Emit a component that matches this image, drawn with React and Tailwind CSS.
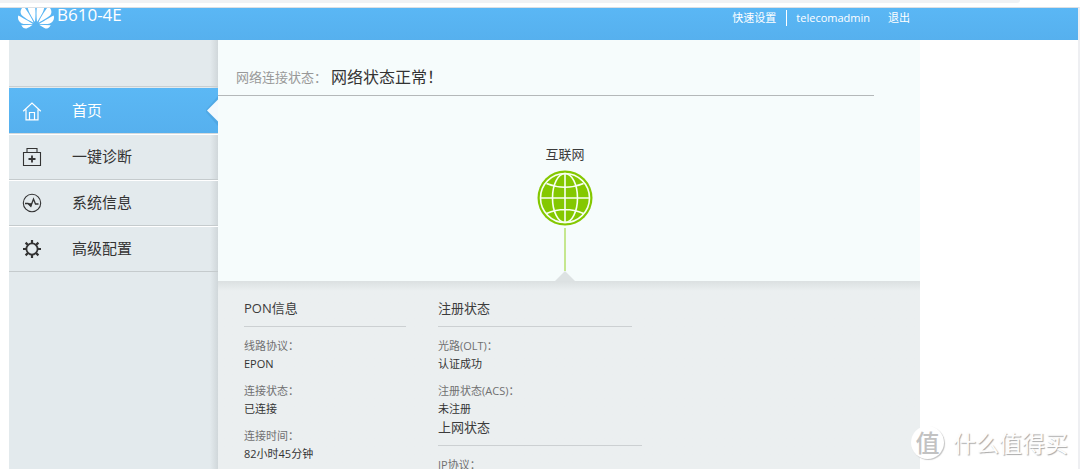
import React from "react";
import { SiHuawei } from "react-icons/si";

const HomeIcon = () => (
  <svg viewBox="0 0 20 20" className="size-5" fill="none" stroke="currentColor" strokeWidth="1.2" aria-hidden="true">
    <path d="M1.200 10.200 10 2l8.800 8.200M4 8.500V18.800h12V8.500M7.500 18.500V11.500h5v7" />
  </svg>
);

const DiagnoseIcon = () => (
  <svg viewBox="0 0 20 20" className="size-5" fill="none" stroke="currentColor" strokeWidth="1.1" aria-hidden="true">
    <path d="M1.500 5.500h17v13h-17zM5 5.500V1.500h10v4" />
    <path d="M10 8.500v7M6.500 12h7" strokeWidth="1.8" />
  </svg>
);

const InfoIcon = () => (
  <svg viewBox="0 0 20 20" className="size-5" fill="none" stroke="currentColor" strokeWidth="1.1" aria-hidden="true">
    <circle cx="10" cy="10" r="8.700" />
    <path d="M3 10.500h3l2.800 2.800L11.500 6l2 5h3" strokeWidth="1.3" />
    <path d="M6 10.500l2.800 2.800 1-2.800z" fill="currentColor" strokeWidth="0.6" />
  </svg>
);

const GearIcon = () => (
  <svg viewBox="0 0 20 20" className="size-5" fill="none" stroke="currentColor" aria-hidden="true">
    <circle cx="10" cy="10" r="5.600" strokeWidth="1.8" />
    <path
      d="M10 1v3.500M10 15.500V19M1 10h3.500M15.500 10H19M3.600 3.600l2.500 2.500M13.900 13.900l2.500 2.500M3.600 16.400l2.500-2.500M13.900 6.100l2.500-2.500"
      strokeWidth="2.2"
    />
  </svg>
);

const GlobeIcon = () => (
  <svg viewBox="0 0 56 56" className="size-14" fill="none" aria-hidden="true">
    <circle cx="28" cy="28" r="27.500" fill="#84c800" />
    <g stroke="#f8fff2" strokeWidth="1.6">
      <circle cx="28" cy="28" r="24.500" />
      <ellipse cx="28" cy="28" rx="12.500" ry="24.500" />
      <path d="M28 4v48M4 28h48M9.500 13.500Q28 21 46.500 13.500M9.500 43.500Q28 35.500 46.500 43.500" />
    </g>
  </svg>
);

const navItems = [
  { label: "首页", Icon: HomeIcon, active: true },
  { label: "一键诊断", Icon: DiagnoseIcon },
  { label: "系统信息", Icon: InfoIcon },
  { label: "高级配置", Icon: GearIcon },
];

function NavItem({ label, Icon, active }) {
  return (
    <li>
      <a
        href="#"
        aria-current={active ? "page" : undefined}
        className={
          active
            ? "relative flex h-[46px] items-center gap-[30px] border-b border-[#d5dadc] bg-linear-to-b from-[#5bb8f5] to-[#56b0ee] pl-[13px] text-[15px] text-white"
            : "flex h-[46px] items-center gap-[30px] border-t border-b border-t-white border-b-[#c5cbcd] pl-[13px] text-[15px] text-[#333333]"
        }
      >
        <Icon />
        <span className="pb-px">{label}</span>
        {active && (
          <svg viewBox="0 0 12 30" className="absolute right-0 top-2 h-[30px] w-3" aria-hidden="true">
            <path d="M12 0 0 14v2l12 14z" fill="#4498d4" fillOpacity="0.45" />
            <path d="M12 3.500 1 14.500l11 11z" fill="#f3f9fd" />
          </svg>
        )}
      </a>
    </li>
  );
}

function Section({ title, wide, rows }) {
  return (
    <section>
      <h2
        className={
          wide
            ? "w-[204px] border-b border-[#ccd0d2] pb-[9px] text-[13px] leading-[18px] text-[#3c3c3c]"
            : "border-b border-[#ccd0d2] pb-[9px] text-[13px] leading-[18px] text-[#3c3c3c]"
        }
      >
        {title}
      </h2>
      <dl className="flex flex-col gap-[9px] pt-[10px] text-[11px] leading-[18px]">
        {rows.map(([name, value]) => (
          <div key={name}>
            <dt className="text-[#707070]">{name}</dt>
            {value && <dd className="text-[#333333]">{value}</dd>}
          </div>
        ))}
      </dl>
    </section>
  );
}

export default function App() {
  return (
    <div className="relative flex h-screen flex-col overflow-hidden bg-white font-['Open_Sans','Noto_Sans_CJK_SC',sans-serif]">
      <div className="h-[7px] shrink-0 pr-[60px]">
        <div className="h-[3px] rounded-br-lg bg-[#f1f2f4]" />
      </div>
      <div className="flex min-h-0 grow flex-col border-t border-r-2 border-t-[#dcdfe3] border-r-[#eeeff2]">
        <header className="flex h-8 shrink-0 justify-between overflow-hidden bg-linear-to-b from-[#5ab7f5] to-[#56b0ee] pl-[18px] text-white">
          <div className="flex h-[14px] items-center gap-[3px]">
            <SiHuawei className="size-9 shrink-0" aria-hidden="true" />
            <h1 className="text-[17px] leading-[14px]">B610-4E</h1>
          </div>
          <nav className="flex h-5 items-center pr-[168px] text-[11px] leading-4">
            <a href="#" className="border-r border-white pr-[10px]">快速设置</a>
            <a href="#" className="pl-[9px]">telecomadmin</a>
            <a href="#" className="pl-[18px]">退出</a>
          </nav>
        </header>

        <div className="ml-[9px] flex min-h-0 w-full max-w-[911px] grow">
          <aside className="w-[209px] shrink-0 bg-[linear-gradient(to_left,#d0d7da_0px,#e3eaed_8px)]">
            <div className="h-[47px] border-b border-[#c9cfd1]" />
            <nav className="pt-px">
              <ul>
                {navItems.map((item) => (
                  <NavItem key={item.label} {...item} />
                ))}
              </ul>
            </nav>
          </aside>

          <main className="flex min-w-0 grow flex-col bg-[#ebeff0]">
            <div className="shrink-0 bg-[#f6fcfc]">
              <div className="mr-[46px] flex h-14 items-end gap-1 border-b border-[#b4b8b9] pb-[6px] pl-[18px]">
                <span className="text-[13px] leading-6 text-[#999999]">网络连接状态：</span>
                <strong className="text-[16px] font-normal leading-6 text-[#333333]">网络状态正常！</strong>
              </div>
              <div className="flex flex-col items-center pr-2 pt-[49px]">
                <p className="text-[13px] leading-[18px] text-[#3c3c3c]">互联网</p>
                <div className="pt-[7px]">
                  <GlobeIcon />
                </div>
                <div className="mt-[2px] h-[43px] w-[2px] bg-[#c5e78f]" />
                <svg viewBox="0 0 20 10" className="h-[10px] w-5" aria-hidden="true">
                  <path d="M0 10 10 0l10 10z" fill="#dde2e3" />
                </svg>
              </div>
            </div>
            <div className="flex grow gap-8 bg-linear-to-b from-[#dbe0e1] to-[#ebeff0] to-[10px] pl-[26px] pt-[18px]">
              <div className="w-[162px]">
                <Section
                  title="PON信息"
                  rows={[
                    ["线路协议：", "EPON"],
                    ["连接状态：", "已连接"],
                    ["连接时间：", "82小时45分钟"],
                  ]}
                />
              </div>
              <div className="w-[194px]">
                <Section
                  title="注册状态"
                  rows={[
                    ["光路(OLT)：", "认证成功"],
                    ["注册状态(ACS)：", "未注册"],
                  ]}
                />
                <Section title="上网状态" wide rows={[["IP协议："]]} />
              </div>
            </div>
          </main>
        </div>
      </div>

      <div className="absolute bottom-[10px] right-3 flex items-center gap-[9px] text-[#fdfdfd] [text-shadow:1px_1px_1px_#a8a8a8]">
        <span className="flex size-[33px] items-center justify-center rounded-full bg-white text-[24px] font-medium leading-none text-[#c2c2c2] shadow-[1px_1px_1px_#c4c4c4] [text-shadow:none]">
          值
        </span>
        <span className="text-[23px] leading-8">什么值得买</span>
      </div>
    </div>
  );
}
